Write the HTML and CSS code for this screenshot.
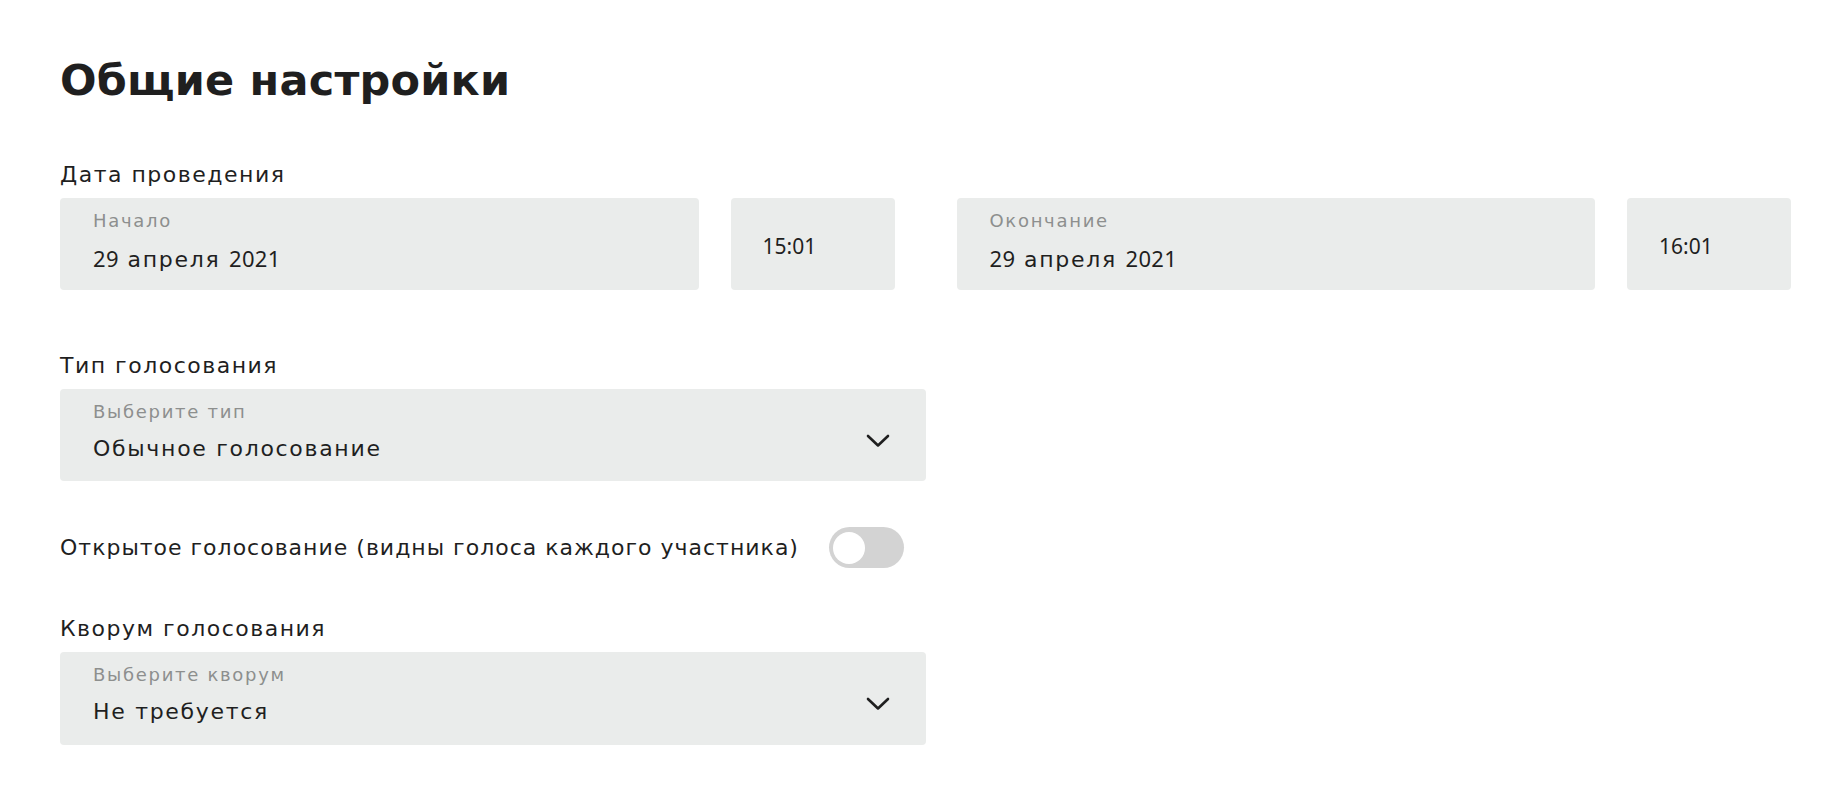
FILE: index.html
```html
<!DOCTYPE html>
<html lang="ru">
<head>
<meta charset="utf-8">
<title>Общие настройки</title>
<link rel="stylesheet" href="styles.css">
</head>
<body>
<main class="page">
  <h1 class="title">Общие настройки</h1>

  <section class="section">
    <div class="label">Дата проведения</div>
    <div class="date-row">
      <div class="date-group">
        <div class="field grow">
          <div class="hint">Начало</div>
          <div class="value"><span class="num">29</span> апреля <span class="num">2021</span></div>
        </div>
        <div class="field time"><div class="value">15:01</div></div>
      </div>
      <div class="date-group">
        <div class="field grow">
          <div class="hint">Окончание</div>
          <div class="value"><span class="num">29</span> апреля <span class="num">2021</span></div>
        </div>
        <div class="field time"><div class="value">16:01</div></div>
      </div>
    </div>
  </section>

  <section class="section sec-type">
    <div class="label">Тип голосования</div>
    <div class="field select">
      <div class="select-text">
        <div class="hint">Выберите тип</div>
        <div class="value">Обычное голосование</div>
      </div>
      <svg class="chevron" width="24" height="14" viewBox="0 0 24 14"><path d="M2 2 L12 11.5 L22 2" fill="none" stroke="#1f1f1f" stroke-width="2.6" stroke-linecap="round" stroke-linejoin="round"/></svg>
    </div>
  </section>

  <div class="toggle-row">
    <span class="toggle-text">Открытое голосование (видны голоса каждого участника)</span>
    <span class="toggle"><span class="knob"></span></span>
  </div>

  <section class="section sec-quorum">
    <div class="label">Кворум голосования</div>
    <div class="field select">
      <div class="select-text">
        <div class="hint">Выберите кворум</div>
        <div class="value">Не требуется</div>
      </div>
      <svg class="chevron" width="24" height="14" viewBox="0 0 24 14"><path d="M2 2 L12 11.5 L22 2" fill="none" stroke="#1f1f1f" stroke-width="2.6" stroke-linecap="round" stroke-linejoin="round"/></svg>
    </div>
  </section>
</main>
</body>
</html>
```

FILE: styles.css
```css
* { box-sizing: border-box; }
html, body { margin: 0; padding: 0; background: #ffffff; }
body {
  font-family: "DejaVu Sans", "Noto Sans", sans-serif;
  color: #1f1f1f;
}
.page {
  padding: 50px 37px 0 60px;
}
.title {
  margin: 0;
  font-family: "DejaVu Sans", "Noto Sans", sans-serif;
  font-weight: 700;
  font-size: 43px;
  line-height: 60px;
  letter-spacing: 0.2px;
  color: #1f1f1f;
}
.section { margin-top: 53px; }
.label {
  font-size: 22px;
  line-height: 24px;
  letter-spacing: 1.5px;
  margin-bottom: 11px;
}
.date-row {
  display: flex;
  gap: 62px;
}
.date-group {
  flex: 1;
  display: flex;
  gap: 32px;
}
.field {
  background: #eaeceb;
  border-radius: 4px;
  height: 92px;
  padding: 13px 32px 0 33px;
}
.grow { flex: 1; }
.time {
  width: 164px;
  display: flex;
  align-items: center;
  padding: 4px 32px 0 32px;
}
.hint {
  font-size: 18px;
  line-height: 20px;
  letter-spacing: 1.7px;
  color: #8d8f8e;
}
.value {
  font-size: 22px;
  line-height: 26px;
  letter-spacing: 1.7px;
  margin-top: 14px;
}
.num {
  font-family: "Noto Sans", sans-serif;
  letter-spacing: 0.3px;
}
.time .value {
  margin-top: 0;
  font-family: "Noto Sans", sans-serif;
  font-size: 21px;
  letter-spacing: 0;
}
.sec-type { margin-top: 64px; }
.select {
  width: 866px;
  display: flex;
  align-items: flex-start;
  justify-content: space-between;
  padding-right: 36px;
}
.chevron { margin-top: 32px; }
.toggle-row {
  margin-top: 46px;
  display: flex;
  align-items: center;
  gap: 30px;
  height: 41px;
}
.toggle-text { font-size: 22px; line-height: 24px; letter-spacing: 1px; }
.toggle {
  width: 75px;
  height: 41px;
  border-radius: 21px;
  background: #d3d3d3;
  display: flex;
  align-items: center;
  padding-left: 4px;
}
.knob {
  width: 32px;
  height: 32px;
  border-radius: 50%;
  background: #ffffff;
}
.sec-quorum { margin-top: 49px; }
.sec-quorum .field { height: 93px; }
```
